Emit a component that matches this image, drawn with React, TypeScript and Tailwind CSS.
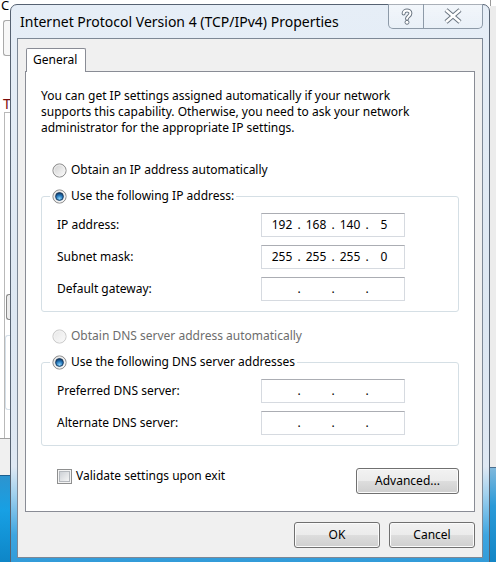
import React from "react";

const FONT = "font-['Noto_Sans',sans-serif]";

function Radio({ checked, disabled }: { checked?: boolean; disabled?: boolean }) {
  return (
    <svg width="15" height="15" viewBox="0 0 15 15" className="shrink-0">
      <defs>
        <linearGradient id="rgOut" x1="0" y1="0" x2="1" y2="1">
          <stop offset="0" stopColor="#cdcdcd" />
          <stop offset="1" stopColor="#ffffff" />
        </linearGradient>
        <linearGradient id="rgOutD" x1="0" y1="0" x2="1" y2="1">
          <stop offset="0" stopColor="#e6e6e6" />
          <stop offset="1" stopColor="#fbfbfb" />
        </linearGradient>
        <radialGradient id="rgDot" cx="0.5" cy="0.78" r="0.75">
          <stop offset="0" stopColor="#8fd6fb" />
          <stop offset="0.55" stopColor="#2478bd" />
          <stop offset="1" stopColor="#0c355f" />
        </radialGradient>
      </defs>
      <circle
        cx="7.5"
        cy="7.5"
        r="6.6"
        fill={disabled ? "url(#rgOutD)" : "url(#rgOut)"}
        stroke={disabled ? "#c9c9c9" : "#8b8b8b"}
        strokeWidth="1"
      />
      <circle cx="7.5" cy="7.5" r="5.4" fill="none" stroke={disabled ? "#f4f4f4" : "#f3f3f3"} strokeWidth="0.8" />
      {checked && <circle cx="7.5" cy="7.5" r="3.9" fill="url(#rgDot)" stroke="#1a3a5e" strokeWidth="0.9" />}
    </svg>
  );
}

function Checkbox() {
  return (
    <svg width="15" height="15" viewBox="0 0 15 15" className="shrink-0">
      <defs>
        <linearGradient id="cbIn" x1="0" y1="0" x2="1" y2="1">
          <stop offset="0" stopColor="#cbcfd4" />
          <stop offset="1" stopColor="#f7f7f7" />
        </linearGradient>
      </defs>
      <rect x="0.5" y="0.5" width="14" height="14" fill="#f4f4f4" stroke="#8e8f8f" />
      <rect x="2.5" y="2.5" width="10" height="10" fill="url(#cbIn)" stroke="#b4b8bd" />
    </svg>
  );
}

function IpField({ parts }: { parts: string[] }) {
  return (
    <div className="w-[144px] h-[24px] shrink-0 border border-[#d6dae0] border-t-[#abadb3] bg-white flex items-center pl-[6px] text-[12px] text-black">
      <span className="w-[28px] text-center">{parts[0]}</span>
      <span className="w-[6px] text-center">.</span>
      <span className="w-[28px] text-center">{parts[1]}</span>
      <span className="w-[6px] text-center">.</span>
      <span className="w-[28px] text-center">{parts[2]}</span>
      <span className="w-[6px] text-center">.</span>
      <span className="w-[28px] text-center">{parts[3]}</span>
    </div>
  );
}

function FieldRow({ label, parts }: { label: string; parts: string[] }) {
  return (
    <div className="flex items-center h-[24px]">
      <span className="w-[219px] pl-[15px] shrink-0">{label}</span>
      <IpField parts={parts} />
    </div>
  );
}

function Btn({ children, w }: { children: React.ReactNode; w: string }) {
  return (
    <div
      className={`${w} h-[26px] rounded-[3px] border border-[#707070] shadow-[inset_0_0_0_1px_#fbfbfb] bg-[linear-gradient(to_bottom,#f2f2f2_0%,#ebebeb_50%,#dddddd_51%,#cfcfcf_100%)] flex items-center justify-center text-[12px] text-black`}
    >
      {children}
    </div>
  );
}

function TitleButtons() {
  return (
    <div className="-mt-[1px] mr-[6px] flex h-[25px] rounded-b-[5px] border border-t-0 border-[#8d9aa8] bg-[linear-gradient(to_bottom,rgba(255,255,255,0.5),rgba(255,255,255,0.15))]">
      <div className="w-[35px] flex items-center justify-center border-r border-[#8d9aa8]">
        <svg width="12" height="17" viewBox="0 0 12 17" className="ml-[2px]">
          <path d="M2.6 5.4 C2.6 1.6 9.4 1.6 9.4 5.2 C9.4 8.2 6 8.2 6 10.8" fill="none" stroke="#6b7682" strokeWidth="4" strokeLinecap="round" />
          <path d="M2.6 5.4 C2.6 1.6 9.4 1.6 9.4 5.2 C9.4 8.2 6 8.2 6 10.8" fill="none" stroke="#ffffff" strokeWidth="2" strokeLinecap="round" />
          <circle cx="6" cy="14.3" r="2" fill="#ffffff" stroke="#6b7682" strokeWidth="1" />
        </svg>
      </div>
      <div className="w-[58px] flex items-center justify-center">
        <svg width="20" height="16" viewBox="0 0 20 16">
          <path d="M3 2 L17 14 M17 2 L3 14" fill="none" stroke="#6b7682" strokeWidth="4.6" />
          <path d="M3 2 L17 14 M17 2 L3 14" fill="none" stroke="#ffffff" strokeWidth="2.6" />
        </svg>
      </div>
    </div>
  );
}

export default function App() {
  return (
    <div className={`${FONT} relative w-[496px] h-[562px] overflow-hidden bg-white flex text-[12px] text-black`}>
      {/* background window, left strip */}
      <div className="w-[10px] shrink-0 flex flex-col">
        <div className="h-[20px] relative">
          <span className="absolute left-[1px] -top-[3px] text-[13px] leading-[16px]">C</span>
        </div>
        <div className="h-[36px] ml-[3px] border border-r-0 border-[#a9a9a9] rounded-l-[3px] bg-[#f7f7f7]" />
        <div className="h-[40px]" />
        <div className="h-[16px] pl-[3px] text-[#7a0b0b] text-[14px] leading-[16px]">T</div>
        <div className="flex-1 ml-[4px] border-l border-t border-[#b9b9b9] flex flex-col">
          <div className="h-[181px]" />
          <div className="h-[26px] ml-[1px] border border-r-0 border-[#8a8a8a] rounded-l-[3px] bg-[#ececec]" />
          <div className="h-[15px]" />
          <div className="h-[75px] border border-r-0 border-[#d5dfe8] rounded-l-[3px]" />
          <div className="flex-1" />
        </div>
        <div className="h-[37px] border-t border-[#a0a0a0] bg-[#f0f0f0]" />
        <div className="h-[87px] border-t border-[#1d5f8f] bg-[linear-gradient(to_bottom,#2d94cf,#17a0e4_40%,#0e86c7)]" />
      </div>
      <div className="flex-1" />
      {/* background, right strip */}
      <div className="w-[6px] shrink-0 flex flex-col">
        <div className="h-[6px] border-l border-[#9a9a9a]" />
        <div className="flex-1 bg-[#ececec]" />
        <div className="h-[95px] border-t border-[#4a6f8f] bg-[linear-gradient(to_bottom,#7fb8dc,#2a9ad8_40%,#1386c6)]" />
      </div>

      {/* dialog window */}
      <div className="absolute left-[10px] top-[4px] w-[480px] h-[572px] rounded-t-[7px] border border-[#566272] bg-[linear-gradient(to_bottom,#e6eef7_0%,#dde7f2_55%,#dfe8f3_81%,#9fd0ee_86%,#3ea5e0_93%,#2d97d6_100%)] flex flex-col">
        {/* title bar */}
        <div className="h-[33px] shrink-0 flex items-start justify-between">
          <div className="pl-[9px] pt-[7px] text-[14px] leading-[20px] text-black">
            Internet Protocol Version 4 (TCP/IPv4) Properties
          </div>
          <TitleButtons />
        </div>
        {/* client area */}
        <div className="mx-[6px] h-[520px] shrink-0 border border-[#7d8896] bg-[#f0f0f0] flex flex-col pt-[9px] px-[7px]">
          {/* tab header */}
          <div className="flex pl-[1px]">
            <div className="relative z-10 -mb-[1px] w-[60px] h-[24px] border border-b-0 border-[#898c95] bg-white rounded-t-[2px] pl-[6px] leading-[22px]">
              General
            </div>
          </div>
          {/* tab panel */}
          <div className="h-[441px] border border-[#898c95] bg-white px-[15px] pt-[16px] flex flex-col">
            <p className="leading-[16px]">
              You can get IP settings assigned automatically if your network
              <br />
              supports this capability. Otherwise, you need to ask your network
              <br />
              administrator for the appropriate IP settings.
            </p>

            <div className="mt-[26px] h-[16px] ml-[11px] flex items-center gap-[4px]">
              <Radio />
              <span>Obtain an IP address automatically</span>
            </div>

            <fieldset className="mt-[10px] border border-[#d5dfe5] rounded-[3px] pt-[9px] pb-[10px] flex flex-col gap-[8px]">
              <legend className="ml-[8px] px-[2px]">
                <span className="h-[16px] flex items-center gap-[4px]">
                  <Radio checked />
                  <span>Use the following IP address:</span>
                </span>
              </legend>
              <FieldRow label="IP address:" parts={["192", "168", "140", "5"]} />
              <FieldRow label="Subnet mask:" parts={["255", "255", "255", "0"]} />
              <FieldRow label="Default gateway:" parts={["", "", "", ""]} />
            </fieldset>

            <div className="mt-[16px] h-[16px] ml-[11px] flex items-center gap-[4px] text-[#6d6d6d]">
              <Radio disabled />
              <span>Obtain DNS server address automatically</span>
            </div>

            <fieldset className="mt-[10px] border border-[#d5dfe5] rounded-[3px] pt-[9px] pb-[10px] flex flex-col gap-[8px]">
              <legend className="ml-[8px] px-[2px]">
                <span className="h-[16px] flex items-center gap-[4px]">
                  <Radio checked />
                  <span>Use the following DNS server addresses</span>
                </span>
              </legend>
              <FieldRow label="Preferred DNS server:" parts={["", "", "", ""]} />
              <FieldRow label="Alternate DNS server:" parts={["", "", "", ""]} />
            </fieldset>

            <div className="mt-[22px] flex items-start justify-between">
              <div className="ml-[16px] h-[16px] flex items-center gap-[4px]">
                <Checkbox />
                <span>Validate settings upon exit</span>
              </div>
              <Btn w="w-[103px]">Advanced...</Btn>
            </div>
          </div>
          {/* dialog buttons */}
          <div className="mt-[10px] flex justify-end gap-[9px]">
            <Btn w="w-[86px]">OK</Btn>
            <Btn w="w-[86px]">Cancel</Btn>
          </div>
        </div>
      </div>
    </div>
  );
}
